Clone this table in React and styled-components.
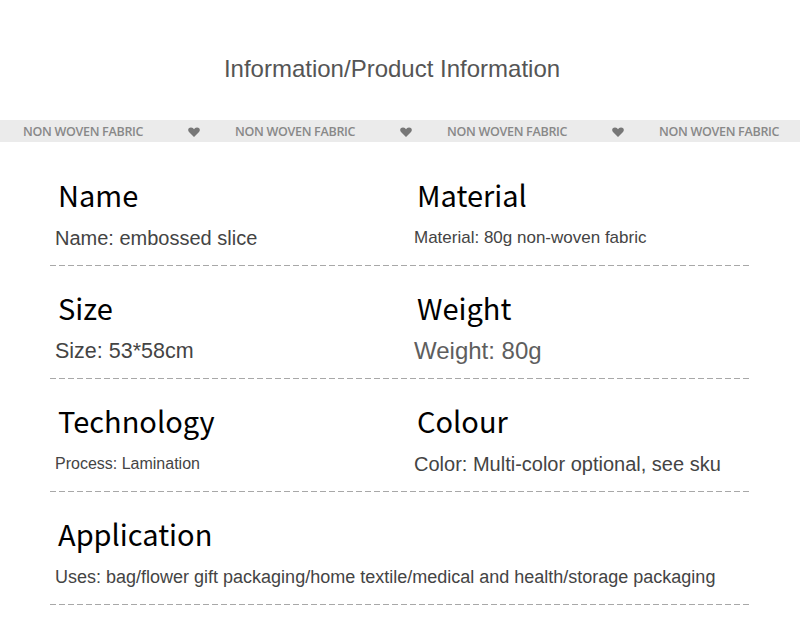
import React from 'react'
import styled, { createGlobalStyle } from 'styled-components'

const GlobalStyle = createGlobalStyle`
    body {
        margin: 0;
        background: #fff;
        font-family: "Liberation Sans", Arial, sans-serif;
    }
`

const items = [
    [
        { title: 'Name', value: 'Name: embossed slice', size: 20 },
        { title: 'Material', value: 'Material: 80g non-woven fabric', size: 17 },
    ],
    [
        { title: 'Size', value: 'Size: 53*58cm', size: 21.5 },
        { title: 'Weight', value: 'Weight: 80g', size: 24, light: true },
    ],
    [
        { title: 'Technology', value: 'Process: Lamination', size: 16 },
        { title: 'Colour', value: 'Color: Multi-color optional, see sku', size: 20 },
    ],
    [
        { title: 'Application', value: 'Uses: bag/flower gift packaging/home textile/medical and health/storage packaging', size: 18 },
    ],
]

function Heart() {
    return (
        <HeartIcon viewBox="0 0 12 10">
            <path d="M6 10 L1 5 C-0.5 3.5 0 0.5 3 0.5 C4.5 0.5 5.5 1.5 6 2.3 C6.5 1.5 7.5 0.5 9 0.5 C12 0.5 12.5 3.5 11 5 Z" />
        </HeartIcon>
    )
}

function App() {
    return (
        <Page>
            <GlobalStyle />
            <Title>Information/Product Information</Title>
            <Band>
                {[0, 1, 2, 3].map(i => (
                    <React.Fragment key={i}>
                        <BandText>NON WOVEN FABRIC</BandText>
                        {i < 3 && <Heart />}
                    </React.Fragment>
                ))}
            </Band>
            <Table>
                {items.map((row, i) => (
                    <Row key={i} first={i === 0} single={row.length === 1}>
                        {row.map(cell => (
                            <Cell key={cell.title}>
                                <Heading>{cell.title}</Heading>
                                <Value size={cell.size} light={cell.light}>{cell.value}</Value>
                            </Cell>
                        ))}
                    </Row>
                ))}
            </Table>
        </Page>
    )
}

export default App

const Page = styled.div`
    width: 800px;
    height: 630px;
    overflow: hidden;
`

const Title = styled.h1`
    margin: 0;
    padding: 54px 16px 0 0;
    height: 30px;
    line-height: 30px;
    text-align: center;
    font-size: 24px;
    font-weight: 400;
    color: #555;
    margin-bottom: 36px;
`

const Band = styled.div`
    height: 22px;
    background: #ebebeb;
    display: flex;
    align-items: center;
    padding-left: 23px;
`

const BandText = styled.span`
    font-family: "Open Sans", "Noto Sans", sans-serif;
    font-weight: 600;
    font-size: 12.5px;
    letter-spacing: -0.3px;
    color: #888;
    width: 116px;
    flex-shrink: 0;
    white-space: nowrap;
    margin-right: 49px;
`

const HeartIcon = styled.svg`
    width: 12px;
    height: 10px;
    flex-shrink: 0;
    fill: #777;
    margin-right: 35px;
    margin-top: 2px;
`

const Table = styled.div`
    margin-left: 50px;
    width: 702px;
`

const Row = styled.div`
    display: grid;
    grid-template-columns: ${p => (p.single ? '1fr' : '359px 1fr')};
    padding: ${p => (p.first ? '32px' : '21px')} 0 12px;
    background-image: repeating-linear-gradient(90deg, #a8a8a8 0 6px, transparent 6px 9px);
    background-size: 100% 1px;
    background-position: left bottom;
    background-repeat: no-repeat;
    border-bottom: 1px solid transparent;
    background-origin: border-box;
`

const Cell = styled.div`
    display: flex;
    flex-direction: column;
    padding-left: 5px;
`

const Heading = styled.div`
    font-family: "Noto Sans CJK SC", "Noto Sans", sans-serif;
    font-size: 29px;
    font-weight: 400;
    line-height: 40px;
    height: 40px;
    color: #000;
    margin-left: 3px;
    margin-bottom: 9px;
`

const Value = styled.div`
    font-size: ${p => p.size}px;
    line-height: 30px;
    height: 30px;
    white-space: nowrap;
    color: ${p => (p.light ? '#5e5e5e' : '#444')};
`
